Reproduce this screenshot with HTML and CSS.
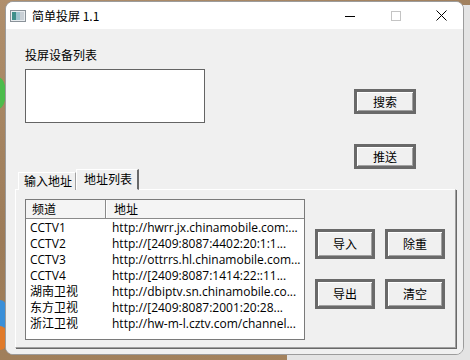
FILE: index.html
```html
<!DOCTYPE html>
<html lang="zh-CN">
<head>
    <meta charset="UTF-8">
    <title>简单投屏 1.1</title>
    <link rel="stylesheet" href="styles.css">
</head>
<body>
    <div class="desktop">
        <div class="back-window"></div>
        <span class="desk-icon green"></span>
        <span class="desk-icon blue"></span>
        <span class="desk-icon orange"></span>

        <div class="window">
            <div class="titlebar">
                <svg class="app-icon" width="16" height="12" viewBox="0 0 16 12">
                    <rect x="0.5" y="0.5" width="15" height="11" fill="#e8ecef" stroke="#8a9299"/>
                    <rect x="2" y="2" width="4" height="8" fill="#3f8f8a"/>
                    <rect x="6" y="2" width="4" height="8" fill="#9fc4cf"/>
                    <rect x="10" y="2" width="4" height="8" fill="#c9d0d6"/>
                </svg>
                <span class="title">简单投屏 1.1</span>
                <div class="caption">
                    <span class="cap-btn">
                        <svg width="10" height="10" viewBox="0 0 10 10"><path d="M0 5.5h10" stroke="#000" stroke-width="1"/></svg>
                    </span>
                    <span class="cap-btn">
                        <svg width="10" height="10" viewBox="0 0 10 10"><rect x="0.5" y="0.5" width="9" height="9" fill="none" stroke="#c4c4c4"/></svg>
                    </span>
                    <span class="cap-btn">
                        <svg width="11" height="11" viewBox="0 0 11 11"><path d="M0.5 0.5l10 10M10.5 0.5l-10 10" stroke="#000" stroke-width="1"/></svg>
                    </span>
                </div>
            </div>

            <div class="client">
                <div class="top">
                    <div class="device">
                        <div class="device-label">投屏设备列表</div>
                        <div class="listbox"></div>
                    </div>
                    <div class="actions">
                        <button class="btn">搜索</button>
                        <button class="btn">推送</button>
                    </div>
                </div>

                <div class="tabs">
                    <div class="tab">输入地址</div>
                    <div class="tab active">地址列表</div>
                </div>

                <div class="panel">
                    <div class="listview">
                        <div class="lv-header">
                            <div class="lv-col first">频道</div>
                            <div class="lv-col">地址</div>
                        </div>
                        <div class="lv-rows">
                            <div class="lv-row"><span class="c1">CCTV1</span><span class="c2">http://hwrr.jx.chinamobile.com:...</span></div>
                            <div class="lv-row"><span class="c1">CCTV2</span><span class="c2">http://[2409:8087:4402:20:1:1...</span></div>
                            <div class="lv-row"><span class="c1">CCTV3</span><span class="c2">http://ottrrs.hl.chinamobile.com...</span></div>
                            <div class="lv-row"><span class="c1">CCTV4</span><span class="c2">http://[2409:8087:1414:22::11...</span></div>
                            <div class="lv-row"><span class="c1">湖南卫视</span><span class="c2">http://dbiptv.sn.chinamobile.co...</span></div>
                            <div class="lv-row"><span class="c1">东方卫视</span><span class="c2">http://[2409:8087:2001:20:28...</span></div>
                            <div class="lv-row"><span class="c1">浙江卫视</span><span class="c2">http://hw-m-l.cztv.com/channel...</span></div>
                        </div>
                    </div>
                    <div class="panel-actions">
                        <button class="btn small">导入</button>
                        <button class="btn small">除重</button>
                        <button class="btn small">导出</button>
                        <button class="btn small">清空</button>
                    </div>
                </div>
            </div>
        </div>
    </div>
</body>
</html>
```

FILE: styles.css
```css
:root {
    --face: #f0f0f0;
    --dark: #696969;
    --shadow: #a0a0a0;
    --desk: #a3825e;
}

* {
    box-sizing: border-box;
    margin: 0;
    padding: 0;
}

body {
    font-family: "Noto Sans CJK SC", "Open Sans", sans-serif;
    font-size: 12px;
    color: #000;
    background-color: var(--desk);
    overflow: hidden;
}

.desktop {
    position: relative;
    width: 470px;
    height: 360px;
    background: linear-gradient(160deg, #b08f6c 0%, #9c7b58 45%, #a6855f 100%);
}

.back-window {
    position: absolute;
    left: 287px;
    top: 5px;
    width: 200px;
    height: 360px;
    background-color: #e4e4e4;
}

.desk-icon {
    position: absolute;
    left: -10px;
    width: 16px;
    border-radius: 6px;
}

.desk-icon.green {
    top: 77px;
    height: 32px;
    background-color: #4cbc4c;
    border-radius: 50%;
}

.desk-icon.blue {
    top: 300px;
    height: 30px;
    background-color: #3a8fd8;
}

.desk-icon.orange {
    top: 326px;
    height: 24px;
    background-color: #e07a2a;
}

.window {
    position: absolute;
    left: 5px;
    top: 1px;
    width: 459px;
    height: 354px;
    background-color: var(--face);
    border: 1px solid #9c9c9c;
    border-radius: 8px;
    overflow: hidden;
    display: flex;
    flex-direction: column;
}

.titlebar {
    height: 27px;
    flex: none;
    background-color: #fff;
    display: flex;
    align-items: center;
    padding-left: 4px;
}

.app-icon {
    display: block;
}

.title {
    margin-left: 6px;
    font-size: 12px;
    line-height: 14px;
    color: #000;
}

.caption {
    margin-left: auto;
    display: flex;
    height: 100%;
}

.cap-btn {
    width: 46px;
    height: 100%;
    display: flex;
    align-items: center;
    justify-content: center;
}

.cap-btn:last-child {
    width: 44px;
}

.client {
    flex: 1;
    background-color: var(--face);
}

.top {
    display: flex;
    height: 140px;
    padding: 19px 0 0 19px;
}

.device {
    width: 180px;
}

.device-label {
    height: 14px;
    line-height: 14px;
    margin-bottom: 7px;
}

.listbox {
    height: 54px;
    background-color: #fff;
    border: 1px solid #646464;
}

.actions {
    margin-left: 149px;
    padding-top: 41px;
    display: flex;
    flex-direction: column;
    gap: 30px;
}

.btn {
    width: 62px;
    height: 30px;
    font-family: "Noto Sans CJK SC", sans-serif;
    font-size: 12px;
    line-height: 14px;
    color: #000;
    background-color: var(--face);
    border: 3px solid var(--dark);
    box-shadow: inset 1px 1px #fff, inset -1px -1px var(--shadow);
    cursor: pointer;
}

.btn.small {
    width: 60px;
}

.tabs {
    display: flex;
    align-items: flex-end;
    height: 21px;
    padding-left: 12px;
    margin-bottom: -1px;
    position: relative;
    z-index: 1;
}

.tab {
    height: 18px;
    width: 58px;
    line-height: 16px;
    padding-left: 5px;
    border-top: 1px solid #fff;
    border-left: 1px solid #fff;
    border-right: 1px solid var(--shadow);
    background-color: var(--face);
}

.tab.active {
    height: 21px;
    width: 63px;
    padding-left: 7px;
    line-height: 18px;
    border-right: 2px solid var(--dark);
    border-bottom: 1px solid var(--face);
}

.panel {
    margin-left: 9px;
    width: 441px;
    height: 159px;
    display: flex;
    padding: 9px;
    border-top: 1px solid #fff;
    border-left: 1px solid #fff;
    border-right: 1px solid var(--shadow);
    border-bottom: 1px solid var(--shadow);
    box-shadow: 1px 1px 0 var(--dark);
}

.listview {
    width: 280px;
    height: 141px;
    background-color: #fff;
    border: 1px solid #7a7a7a;
    font-family: "Open Sans", "Noto Sans CJK SC", sans-serif;
}

.lv-header {
    display: flex;
    height: 19px;
    background-color: #f4f4f4;
    border-bottom: 1px solid #8a8a8a;
}

.lv-col {
    flex: 1;
    line-height: 18px;
    padding-left: 7px;
    font-family: "Noto Sans CJK SC", sans-serif;
    border-left: 1px solid #fff;
}

.lv-col.first {
    flex: none;
    width: 80px;
    padding-left: 6px;
    border-left: none;
    border-right: 1px solid #8a8a8a;
}

.lv-rows {
    padding-top: 1px;
}

.lv-row {
    display: flex;
    height: 16px;
    line-height: 16px;
    white-space: nowrap;
}

.c1 {
    width: 80px;
    padding-left: 4px;
    flex: none;
}

.c2 {
    padding-left: 6px;
    overflow: hidden;
}

.panel-actions {
    margin-left: 10px;
    padding-top: 30px;
    display: grid;
    grid-template-columns: 60px 60px;
    column-gap: 10px;
    row-gap: 20px;
    align-content: start;
}
```
